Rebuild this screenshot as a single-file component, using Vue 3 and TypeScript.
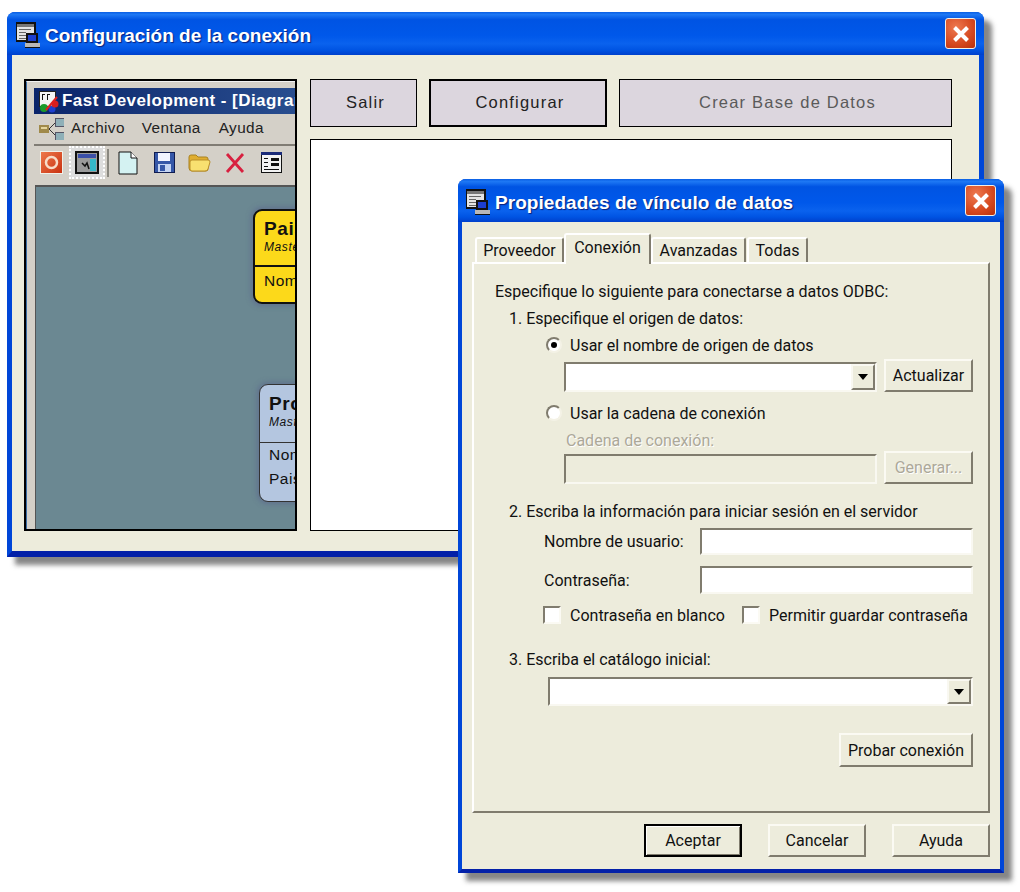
<script setup lang="ts">
const tabs: { label: string; active?: boolean }[] = [
  { label: 'Proveedor' },
  { label: 'Conexión', active: true },
  { label: 'Avanzadas' },
  { label: 'Todas' },
]
</script>

<template>
  <div class="desk">
    <section class="win win-a">
      <header class="tbar">
        <svg class="ticon" width="24" height="26" viewBox="0 0 24 26" shape-rendering="crispEdges">
          <rect x="0" y="0" width="20" height="20" fill="#111" />
          <rect x="1" y="2" width="17" height="16" fill="#e4e4e4" />
          <rect x="1" y="2" width="17" height="3" fill="#777" />
          <path d="M3 7h12v1H3zM3 10h7v1H3zM3 13h7v1H3zM3 16h7v1H3z" fill="#666" />
          <rect x="10" y="11" width="12" height="10" fill="#111" />
          <rect x="12" y="13" width="8" height="6" fill="#1c3fd0" />
          <rect x="9" y="21" width="15" height="4" fill="#b8b8b8" />
          <rect x="9" y="25" width="15" height="1" fill="#111" />
        </svg>
        <h1 class="ttext ttext-a">Configuración de la conexión</h1>
        <button class="xbtn xbtn-a">
          <svg width="20" height="20" viewBox="0 0 20 20"><path d="M3.5 3.5l13 13M16.5 3.5l-13 13" stroke="#fff" stroke-width="4" /></svg>
        </button>
      </header>
      <div class="client-a">
        <div class="shot">
          <div class="shot-inner">
            <div class="app-title">
              <svg width="23" height="23" viewBox="0 0 23 23" shape-rendering="crispEdges">
                <rect x="1" y="1" width="16" height="15" fill="#f4f4f4" stroke="#222" />
                <path d="M4 4h3v1H4zM4 4h1v6H4zM9 4h3v1H9zM9 4h1v6H9z" fill="#111" />
                <circle cx="6" cy="18" r="4" fill="#1a9a2a" shape-rendering="auto" />
                <circle cx="14" cy="19" r="3.5" fill="#1c3fd0" shape-rendering="auto" />
                <circle cx="17" cy="14" r="3.5" fill="#d81f1f" shape-rendering="auto" />
                <path d="M8 20L19 7" stroke="#e02020" stroke-width="2" shape-rendering="auto" />
              </svg>
              <span class="app-title-text">Fast Development - [Diagrama]</span>
            </div>
            <nav class="menu">
              <svg width="25" height="22" viewBox="0 0 25 22" shape-rendering="crispEdges">
                <rect x="0" y="7" width="10" height="8" fill="#a08a4a" />
                <rect x="2" y="9" width="6" height="2" fill="#e4d49a" />
                <path d="M10 11L16 5M10 11L16 17" stroke="#333" fill="none" shape-rendering="auto" />
                <rect x="16" y="0" width="9" height="8" fill="#8fb0b8" stroke="#556" />
                <rect x="16" y="14" width="9" height="8" fill="#8fb0b8" stroke="#556" />
              </svg>
              <span class="m1">Archivo</span><span class="m2">Ventana</span><span class="m3">Ayuda</span>
            </nav>
            <div class="toolbar">
              <svg class="ti-power" width="23" height="23" viewBox="0 0 23 23">
                <defs>
                  <linearGradient id="pw" x1="0" y1="0" x2="1" y2="1"><stop offset="0" stop-color="#ee7a4c" /><stop offset="1" stop-color="#c8300f" /></linearGradient>
                </defs>
                <rect x="0.5" y="0.5" width="22" height="22" fill="url(#pw)" stroke="#f0f0e8" />
                <circle cx="11.5" cy="11.5" r="5.5" fill="none" stroke="#f8dcc8" stroke-width="2.5" />
              </svg>
              <div class="pressed">
                <svg width="24" height="23" viewBox="0 0 24 23" shape-rendering="crispEdges">
                  <rect x="1" y="1" width="22" height="21" fill="#9a9a9a" stroke="#111" stroke-width="2" />
                  <rect x="3" y="3" width="18" height="4" fill="#3b4fa8" />
                  <rect x="15" y="8" width="6" height="12" fill="#35b8c8" />
                  <path d="M7 12l3 3 2-3 2 6" fill="none" stroke="#111" stroke-width="1.5" shape-rendering="auto" />
                </svg>
              </div>
              <div class="tsep"></div>
              <svg class="ti-new" width="20" height="24" viewBox="0 0 20 24">
                <path d="M1 1h12l6 6v16H1z" fill="#d4f2f2" stroke="#111" />
                <path d="M13 1v6h6" fill="#fff" stroke="#111" />
              </svg>
              <svg class="ti-save" width="21" height="21" viewBox="0 0 21 21" shape-rendering="crispEdges">
                <rect x="0.5" y="0.5" width="20" height="20" fill="#3557a8" stroke="#101c50" />
                <rect x="4" y="1" width="12" height="8" fill="#f2f4ff" />
                <rect x="4" y="12" width="13" height="8" fill="#c4d4f2" />
                <rect x="6" y="13" width="5" height="6" fill="#3557a8" />
              </svg>
              <svg class="ti-folder" width="23" height="19" viewBox="0 0 23 19">
                <path d="M1 4q0-2 2-2h5l2 2h8q2 0 2 2v10q0 2-2 2H4q-3 0-3-3z" fill="#e0ae30" stroke="#a98220" />
                <path d="M2 9q0-2 2-2h16q2 0 2 2l-2 7q-1 2-3 2H4q-2 0-2-2z" fill="#f8e070" stroke="#b98f2a" />
              </svg>
              <svg class="ti-x" width="20" height="20" viewBox="0 0 20 20"><path d="M2 1l16 18M18 1L2 19" stroke="#d8203f" stroke-width="2.8" /></svg>
              <svg class="ti-form" width="21" height="21" viewBox="0 0 21 21" shape-rendering="crispEdges">
                <rect x="0.5" y="0.5" width="20" height="20" fill="#f2f2f2" stroke="#111" />
                <rect x="0" y="0" width="21" height="3" fill="#1a2a78" />
                <path d="M3 6h4v1H3zM10 6h8v3h-8zM3 10h4v1H3zM10 11h8v3h-8zM3 14h4v1H3zM3 17h15v1H3z" fill="#111" />
              </svg>
              <div class="ti-cut"></div>
            </div>
            <div class="canvas">
              <div class="node node-y">
                <div class="nhead"><b>Pais</b><i>Master</i></div>
                <div class="nbody"><span>Nombre</span></div>
              </div>
              <div class="node node-b">
                <div class="nhead"><b>Provincia</b><i>Master</i></div>
                <div class="nbody"><span>Nombre</span><span>Pais</span></div>
              </div>
            </div>
          </div>
        </div>
        <div class="side">
          <div class="cmds">
            <button class="cmd cmd-salir">Salir</button>
            <button class="cmd cmd-conf">Configurar</button>
            <button class="cmd cmd-crear">Crear Base de Datos</button>
          </div>
          <div class="log"></div>
        </div>
      </div>
    </section>

    <section class="win win-b">
      <header class="tbar">
        <svg class="ticon" width="24" height="26" viewBox="0 0 24 26" shape-rendering="crispEdges">
          <rect x="0" y="0" width="20" height="20" fill="#111" />
          <rect x="1" y="2" width="17" height="16" fill="#e4e4e4" />
          <rect x="1" y="2" width="17" height="3" fill="#777" />
          <path d="M3 7h12v1H3zM3 10h7v1H3zM3 13h7v1H3zM3 16h7v1H3z" fill="#666" />
          <rect x="10" y="11" width="12" height="10" fill="#111" />
          <rect x="12" y="13" width="8" height="6" fill="#1c3fd0" />
          <rect x="9" y="21" width="15" height="4" fill="#b8b8b8" />
          <rect x="9" y="25" width="15" height="1" fill="#111" />
        </svg>
        <h1 class="ttext ttext-b">Propiedades de vínculo de datos</h1>
        <button class="xbtn xbtn-b">
          <svg width="20" height="20" viewBox="0 0 20 20"><path d="M3.5 3.5l13 13M16.5 3.5l-13 13" stroke="#fff" stroke-width="4" /></svg>
        </button>
      </header>
      <div class="client-b">
        <div class="tabs">
          <div v-for="t in tabs" :key="t.label" class="tab" :class="{ active: t.active }">{{ t.label }}</div>
        </div>
        <div class="panel">
          <p class="line l-intro">Especifique lo siguiente para conectarse a datos ODBC:</p>
          <p class="line l-one">1. Especifique el origen de datos:</p>
          <label class="line opt opt-1"><span class="radio"><span class="dot"></span></span>Usar el nombre de origen de datos</label>
          <div class="fieldrow r-dsn">
            <div class="combo c-dsn"><span class="arrow"><span class="tri"></span></span></div>
            <button class="wbtn">Actualizar</button>
          </div>
          <label class="line opt opt-2"><span class="radio"></span>Usar la cadena de conexión</label>
          <p class="line l-cad">Cadena de conexión:</p>
          <div class="fieldrow r-cad">
            <div class="combo c-cad"></div>
            <button class="wbtn off">Generar...</button>
          </div>
          <p class="line l-two">2. Escriba la información para iniciar sesión en el servidor</p>
          <div class="cred cred-1"><span class="credlab">Nombre de usuario:</span><div class="inp"></div></div>
          <div class="cred cred-2"><span class="credlab">Contraseña:</span><div class="inp"></div></div>
          <div class="line checks">
            <span class="chk"></span><span class="chklab">Contraseña en blanco</span>
            <span class="chk"></span><span>Permitir guardar contraseña</span>
          </div>
          <p class="line l-three">3. Escriba el catálogo inicial:</p>
          <div class="combo c-cat"><span class="arrow"><span class="tri"></span></span></div>
          <div class="testrow"><button class="wbtn b-test">Probar conexión</button></div>
        </div>
        <div class="foot">
          <button class="wbtn fbtn default">Aceptar</button>
          <button class="wbtn fbtn">Cancelar</button>
          <button class="wbtn fbtn">Ayuda</button>
        </div>
      </div>
    </section>
  </div>
</template>

<style>
html, body { margin: 0; background: #fff; }
</style>

<style scoped>
.desk {
  position: relative;
  width: 1020px;
  height: 892px;
  overflow: hidden;
  background: #fff;
  font-family: Roboto, "Liberation Sans", Arial, sans-serif;
  font-size: 16px;
  color: #111;
}
.win {
  position: absolute;
  box-sizing: border-box;
  display: flex;
  flex-direction: column;
  background: #0054e3;
  border-radius: 8px 8px 0 0;
  border: solid #0046d8;
  border-width: 0 5px 6px 5px;
  border-bottom-color: #0320a8;
  box-shadow: 8px 8px 5px 0 rgba(60, 60, 60, 0.62);
}
.win-a { left: 7px; top: 12px; width: 977px; height: 545px; }
.win-b { left: 458px; top: 179px; width: 546px; height: 694px; border-width: 0 4px 4px 4px; }
.tbar {
  height: 43px;
  flex: none;
  display: flex;
  align-items: center;
  margin: 0 -5px;
  padding: 0 8px 0 8px;
  border-radius: 8px 8px 0 0;
  background: linear-gradient(180deg, #0a5fe4 0, #1e78f4 6%, #0054e3 18%, #0058ea 55%, #0a62ee 74%, #0054e3 88%, #0040cc 100%);
}
.win-b .tbar { margin: 0 -4px; padding-left: 7px; }
.ticon { flex: none; margin: 2px 0 0 1px; }
.ttext {
  margin: 0 0 0 5px;
  padding-top: 5px;
  flex: 1;
  color: #fff;
  font-family: "Liberation Sans", Arial, sans-serif;
  font-weight: 700;
  font-size: 19px;
  letter-spacing: 0;
  text-shadow: 1px 1px 1px #0a1f7a;
  white-space: nowrap;
}
.ttext-b { letter-spacing: 0.05px; }
.xbtn {
  flex: none;
  width: 31px;
  height: 31px;
  padding: 0;
  display: flex;
  align-items: center;
  justify-content: center;
  border: 1px solid #f4efe6;
  border-radius: 3px;
  background: radial-gradient(circle at 35% 30%, #ee7a50, #d5481f 60%, #b8300c);
}
.client-a {
  flex: 1;
  display: flex;
  gap: 13px;
  min-height: 0;
  padding: 24px 0 0 12px;
  background: #edecdc;
}
.shot {
  box-sizing: border-box;
  flex: none;
  width: 273px;
  height: 452px;
  border: 2px solid #000;
  background: #d4d0c8;
  overflow: hidden;
}
.shot-inner {
  box-sizing: border-box;
  height: 100%;
  display: flex;
  flex-direction: column;
  padding: 6px 0 0 7px;
  border-left: 1px solid #3a6ea5;
  border-top: 1px solid #f2f2f2;
}
.app-title {
  height: 26px;
  flex: none;
  display: flex;
  align-items: center;
  gap: 1px;
  padding-left: 4px;
  margin-right: -40px;
  background: linear-gradient(90deg, #0a246a, #2a4f90 90%);
}
.app-title-text {
  color: #fff;
  font-family: "Liberation Sans", Arial, sans-serif;
  font-weight: 700;
  font-size: 17px;
  letter-spacing: 0.45px;
  white-space: nowrap;
  margin-top: -1px;
}
.menu {
  height: 30px;
  flex: none;
  box-sizing: content-box;
  display: flex;
  align-items: center;
  padding-left: 5px;
  font-family: "Liberation Sans", Arial, sans-serif;
  font-size: 15.3px;
  letter-spacing: 0.4px;
  color: #222;
  border-bottom: 2px solid #807c74;
}
.menu span { margin-top: -3px; }
.m1 { margin-left: 7px; }
.m2 { margin-left: 17px; }
.m3 { margin-left: 18px; }
.toolbar {
  box-sizing: border-box;
  height: 39px;
  flex: none;
  display: flex;
  align-items: center;
  padding: 0 0 6px 6px;
  white-space: nowrap;
}
.toolbar > * { flex: none; }
.pressed {
  box-sizing: border-box;
  width: 36px;
  height: 33px;
  margin-left: 6px;
  display: flex;
  align-items: center;
  justify-content: center;
  border: 2px dotted #fff;
  background: #ddd;
}
.tsep { width: 2px; height: 28px; margin-left: 2px; background: #8a8880; }
.ti-new { margin-left: 9px; }
.ti-save { margin-left: 16px; }
.ti-folder { margin-left: 13px; }
.ti-x { margin-left: 14px; }
.ti-form { margin-left: 16px; }
.ti-cut { width: 4px; height: 20px; margin-left: 13px; background: #333; }
.canvas {
  position: relative;
  flex: 1;
  margin-left: 1px;
  border-top: 2px solid #555;
  border-left: 1px solid #555;
  background: #6b8892;
  overflow: hidden;
}
.node {
  position: absolute;
  box-sizing: border-box;
  width: 180px;
  border: 2px solid #111;
  border-radius: 9px;
  box-shadow: 0 0 5px 2px rgba(90, 100, 140, 0.6);
  display: flex;
  flex-direction: column;
  color: #111;
  font-family: "Liberation Sans", Arial, sans-serif;
}
.node-y { left: 217px; top: 22px; height: 95px; background: #fcd91a; }
.node-b { left: 223px; top: 197px; height: 118px; background: #b4c6e0; border-width: 1px; border-color: #333; }
.nhead {
  height: 56px;
  flex: none;
  display: flex;
  flex-direction: column;
  padding: 7px 0 0 9px;
  box-sizing: border-box;
  border-bottom: 2px solid #111;
}
.node-b .nhead { height: 58px; border-bottom-width: 1px; border-color: #333; padding-top: 8px; }
.nhead b { font-size: 19px; line-height: 22px; letter-spacing: 0.6px; }
.nhead i { font-size: 12px; line-height: 14px; letter-spacing: 0.6px; }
.nbody {
  display: flex;
  flex-direction: column;
  padding: 2px 0 0 9px;
  font-size: 15.5px;
  line-height: 24px;
  letter-spacing: 0.5px;
}
.node-b .nbody { padding-top: 0; }
.side { flex: none; width: 642px; display: flex; flex-direction: column; gap: 12px; }
.cmds { display: flex; gap: 12px; height: 48px; }
.cmd {
  box-sizing: border-box;
  height: 48px;
  padding: 0 0 1px 4px;
  border: 1px solid #000;
  background: #dcd6de;
  font-family: "Liberation Sans", Arial, sans-serif;
  font-size: 16.5px;
  letter-spacing: 1.2px;
  color: #222;
}
.cmd-salir { width: 107px; }
.cmd-conf { width: 178px; border-width: 2px; }
.cmd-crear { width: 333px; color: #5a5a5a; }
.log { height: 392px; box-sizing: border-box; border: 1px solid #000; background: #fff; }

.client-b {
  flex: 1;
  display: flex;
  flex-direction: column;
  padding: 11px 10px 0 10px;
  min-height: 0;
  background: #edecdc;
}
.tabs { display: flex; align-items: flex-end; height: 29px; padding-left: 3px; position: relative; z-index: 2; }
.tab {
  box-sizing: border-box;
  height: 25px;
  display: flex;
  align-items: center;
  justify-content: center;
  border: solid;
  border-width: 2px 2px 0 2px;
  border-color: #fff #807c6e #edecdc #fff;
  border-radius: 3px 3px 0 0;
}
.tab:nth-child(1) { width: 89px; }
.tab:nth-child(2) { width: 87px; height: 31px; margin-bottom: -2px; padding-bottom: 4px; background: #edecdc; }
.tab:nth-child(3) { width: 95px; }
.tab:nth-child(4) { width: 61px; margin-left: 1px; }
.panel {
  box-sizing: border-box;
  width: 518px;
  height: 551px;
  flex: none;
  border: solid;
  border-width: 2px;
  border-color: #fff #807c6e #807c6e #fff;
}
.line { margin: 0; height: 18px; line-height: 19px; white-space: nowrap; }
.l-intro { margin: 18px 0 0 21px; }
.l-one { margin: 9px 0 0 35px; }
.opt { display: flex; align-items: center; }
.opt-1 { margin: 9px 0 0 72px; }
.radio {
  box-sizing: border-box;
  flex: none;
  width: 16px;
  height: 16px;
  margin-right: 8px;
  display: flex;
  align-items: center;
  justify-content: center;
  border: 2px solid;
  border-color: #807c6e #f4f2e6 #f4f2e6 #807c6e;
  border-radius: 50%;
  background: #fff;
}
.dot { width: 6px; height: 6px; border-radius: 50%; background: #000; }
.fieldrow { display: flex; gap: 7px; height: 33px; }
.r-dsn { margin: 5px 0 0 90px; }
.combo {
  box-sizing: border-box;
  display: flex;
  justify-content: flex-end;
  border: solid 2px;
  border-color: #807c6e #f9f8f1 #f9f8f1 #807c6e;
  background: #fff;
}
.c-dsn, .c-cad { width: 313px; height: 30px; margin-top: 3px; }
.c-cad { background: #edecdc; }
.arrow {
  box-sizing: border-box;
  width: 24px;
  height: 100%;
  display: flex;
  align-items: center;
  justify-content: center;
  border: 2px solid;
  border-color: #f9f8f1 #807c6e #807c6e #f9f8f1;
  background: #edecdc;
}
.tri { width: 0; height: 0; border: solid transparent; border-width: 6px 5px 0 5px; border-top-color: #000; }
.wbtn {
  box-sizing: border-box;
  padding: 0;
  border: 2px solid;
  border-color: #fbfaf3 #807c6e #807c6e #fbfaf3;
  background: #edecdc;
  font: inherit;
  color: #111;
}
.r-dsn .wbtn, .r-cad .wbtn { width: 89px; }
.off { color: #aca899; text-shadow: 1px 1px 0 #fff; }
.opt-2 { margin: 12px 0 0 72px; }
.l-cad { margin: 9px 0 0 92px; color: #aca899; text-shadow: 1px 1px 0 #fff; }
.r-cad { margin: 2px 0 0 90px; }
.l-two { margin: 18px 0 0 35px; }
.cred { display: flex; align-items: center; margin-left: 70px; }
.credlab { width: 156px; flex: none; }
.inp {
  box-sizing: border-box;
  width: 273px;
  height: 100%;
  border: solid 2px;
  border-color: #807c6e #f9f8f1 #f9f8f1 #807c6e;
  background: #fff;
}
.cred-1 { margin-top: 8px; height: 27px; }
.cred-2 { margin-top: 11px; height: 28px; }
.checks { display: flex; align-items: center; margin: 12px 0 0 69px; }
.chk {
  box-sizing: border-box;
  flex: none;
  width: 18px;
  height: 18px;
  margin-right: 9px;
  border: 2px solid;
  border-color: #807c6e #fbfaf3 #fbfaf3 #807c6e;
  background: #fff;
}
.chklab { width: 172px; }
.l-three { margin: 26px 0 0 35px; }
.c-cat { width: 425px; height: 29px; margin: 9px 0 0 74px; }
.testrow { display: flex; justify-content: flex-end; margin: 27px 15px 0 0; }
.b-test { width: 134px; height: 34px; }
.foot { display: flex; justify-content: flex-end; gap: 26px; margin-top: 11px; }
.fbtn { width: 98px; height: 33px; }
.default { border-color: #000; box-shadow: inset 1px 1px 0 #fff, inset -1px -1px 0 #807c6e; }
</style>
